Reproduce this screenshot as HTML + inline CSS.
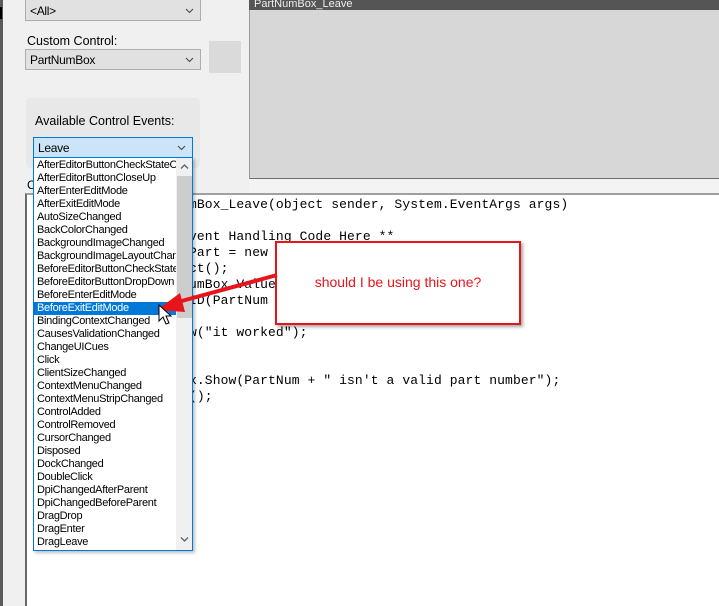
<!DOCTYPE html>
<html><head><style>
*{margin:0;padding:0;box-sizing:border-box}
body{width:719px;height:606px;overflow:hidden;background:#f0f0f0;position:relative;font-family:"Liberation Sans",Arial,sans-serif}
.abs{position:absolute}
.combo{position:absolute;background:#e1e1e1;border:1px solid #adadad;font-size:12px;letter-spacing:-0.3px;padding:3px 4px;color:#000}
.chev{position:absolute;right:6px;top:3px;width:9px;height:9px}
.code{position:absolute;left:189px;font-family:"Liberation Mono","Courier New",monospace;font-size:13px;letter-spacing:0.1px;white-space:pre;color:#000;line-height:16px}
.li{height:13px;line-height:13px;font-size:11px;letter-spacing:-0.3px;padding-left:3px;white-space:nowrap;overflow:hidden;color:#000}
.sel{background:#0078d7;color:#fff}
</style></head><body>
<div class="abs" style="left:0;top:0;width:3px;height:606px;background:#5a5a5a"></div>
<div class="abs" style="left:0;top:7px;width:2px;height:12px;background:#000"></div>

<div class="combo" style="left:25px;top:-2px;width:176px;height:23px;padding-top:5px">&lt;All&gt;<svg class="chev" style="top:7px" viewBox="0 0 9 9"><path d="M1 3l3.5 3.5L8 3" fill="none" stroke="#444" stroke-width="1"/></svg></div>
<div class="abs" style="left:27px;top:34px;font-size:12.5px;color:#000">Custom Control:</div>
<div class="combo" style="left:25px;top:49px;width:176px;height:21px">PartNumBox<svg class="chev" style="top:5px" viewBox="0 0 9 9"><path d="M1 3l3.5 3.5L8 3" fill="none" stroke="#444" stroke-width="1"/></svg></div>
<div class="abs" style="left:209px;top:41px;width:32px;height:32px;background:#dadada"></div>

<div class="abs" style="left:26px;top:98px;width:174px;height:70px;background:#e8e8e8;border-radius:4px"></div>
<div class="abs" style="left:35px;top:114px;font-size:12.5px;color:#000">Available Control Events:</div>

<div class="abs" style="left:249px;top:0;width:470px;height:179px;background:#d7d7d7;border-left:1px solid #9a9a9a;border-bottom:1px solid #6e6e6e"></div>
<div class="abs" style="left:249px;top:0;width:470px;height:10px;background:#555;color:#eee;font-size:11px;line-height:8px;padding-left:5px;overflow:hidden">PartNumBox_Leave</div>
<div class="abs" style="left:249px;top:179px;width:470px;height:14px;background:#f3f3f4"></div>

<div class="abs" style="left:27px;top:178px;font-size:12px;color:#000">C</div>
<div class="abs" style="left:25px;top:193px;width:694px;height:413px;background:#fff;border-left:2px solid #6a6a6a;border-top:2px solid #a0a0a0"></div>

<div class="code" style="top:197px">mBox_Leave(object sender, System.EventArgs args)</div>
<div class="code" style="top:229px">vent Handling Code Here **</div>
<div class="code" style="top:245px">Part = new</div>
<div class="code" style="top:261px">ct();</div>
<div class="code" style="top:277px">umBox.Value</div>
<div class="code" style="top:293px">ID(PartNum</div>
<div class="code" style="top:325px">w("it worked");</div>
<div class="code" style="top:373px">x.Show(PartNum + " isn't a valid part number");</div>
<div class="code" style="top:389px">();</div>

<div class="abs" style="left:275px;top:241px;width:246px;height:84px;background:#fff;border:2px solid #e8141b;box-shadow:2px 2px 3px rgba(0,0,0,.35)"></div>
<div class="abs" style="left:275px;top:274px;width:246px;text-align:center;font-size:14px;color:#e8141b">should I be using this one?</div>

<div class="combo" style="left:33px;top:137px;width:160px;height:21px;background:#cce4f7;border-color:#0078d7">Leave<svg class="chev" style="top:5px" viewBox="0 0 9 9"><path d="M1 3l3.5 3.5L8 3" fill="none" stroke="#444" stroke-width="1"/></svg></div>

<div class="abs" style="left:33px;top:157px;width:160px;height:394px;background:#fff;border:1px solid #0078d7;box-shadow:2px 2px 3px rgba(0,0,0,.25);overflow:hidden">
 <div class="abs" style="left:0;top:1px;width:142px">
  <div class="li">AfterEditorButtonCheckStateChanged</div>
  <div class="li">AfterEditorButtonCloseUp</div>
  <div class="li">AfterEnterEditMode</div>
  <div class="li">AfterExitEditMode</div>
  <div class="li">AutoSizeChanged</div>
  <div class="li">BackColorChanged</div>
  <div class="li">BackgroundImageChanged</div>
  <div class="li">BackgroundImageLayoutChanged</div>
  <div class="li">BeforeEditorButtonCheckStateChanged</div>
  <div class="li">BeforeEditorButtonDropDown</div>
  <div class="li">BeforeEnterEditMode</div>
  <div class="li sel">BeforeExitEditMode</div>
  <div class="li">BindingContextChanged</div>
  <div class="li">CausesValidationChanged</div>
  <div class="li">ChangeUICues</div>
  <div class="li">Click</div>
  <div class="li">ClientSizeChanged</div>
  <div class="li">ContextMenuChanged</div>
  <div class="li">ContextMenuStripChanged</div>
  <div class="li">ControlAdded</div>
  <div class="li">ControlRemoved</div>
  <div class="li">CursorChanged</div>
  <div class="li">Disposed</div>
  <div class="li">DockChanged</div>
  <div class="li">DoubleClick</div>
  <div class="li">DpiChangedAfterParent</div>
  <div class="li">DpiChangedBeforeParent</div>
  <div class="li">DragDrop</div>
  <div class="li">DragEnter</div>
  <div class="li">DragLeave</div>
 </div>
 <div class="abs" style="left:142px;top:0;width:17px;height:392px;background:#f0f0f0">
  <svg class="abs" style="left:4px;top:5px" width="9" height="7" viewBox="0 0 9 7"><path d="M1 5.5l3.5-3.5L8 5.5" fill="none" stroke="#606060" stroke-width="1.3"/></svg>
  <div class="abs" style="left:1px;top:18px;width:15px;height:142px;background:#cdcdcd"></div>
  <svg class="abs" style="left:4px;top:378px" width="9" height="7" viewBox="0 0 9 7"><path d="M1 1.5l3.5 3.5L8 1.5" fill="none" stroke="#606060" stroke-width="1.3"/></svg>
 </div>
</div>

<svg class="abs" style="left:0;top:0" width="719" height="606" viewBox="0 0 719 606">
 <line x1="277" y1="275" x2="178" y2="302" stroke="#e8141b" stroke-width="4"/>
 <polygon points="157,310 180,293 185,312" fill="#e8141b"/>
 <path d="M159 305 L159 321 L163 317 L166 324 L169 323 L166 316 L171 316 Z" fill="#fff" stroke="#000" stroke-width="1"/>
</svg>
</body></html>
